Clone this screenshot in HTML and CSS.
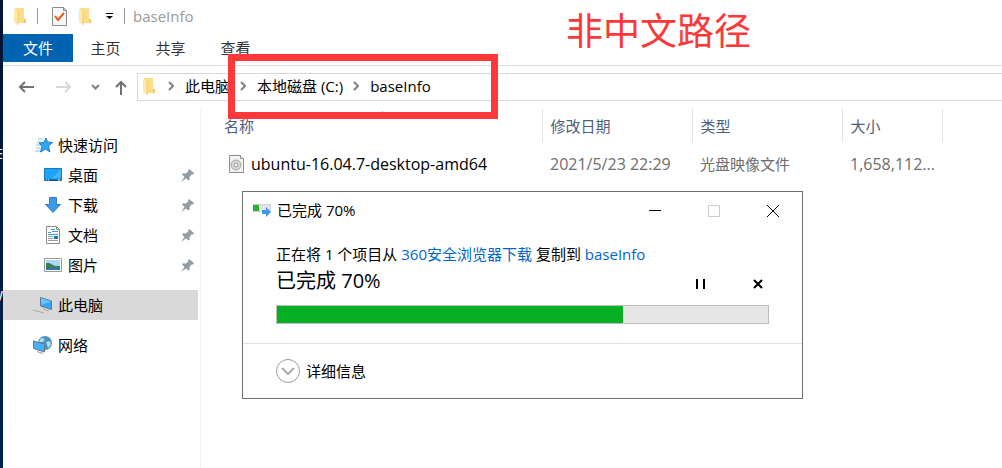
FILE: index.html
```html
<!DOCTYPE html>
<html lang="zh-CN">
<head>
    <meta charset="UTF-8">
    <meta name="viewport" content="width=device-width, initial-scale=1.0">
    <title>baseInfo</title>
    <link rel="stylesheet" href="styles.css">
</head>
<body>
    <!-- shared icons -->
    <svg class="sprite" aria-hidden="true">
        <symbol id="folder" viewBox="0 0 12 17">
            <path d="M1 0h9v11h2v4H1z" fill="#fbdc8a"/>
            <path d="M0 1l4 2v14l-4-3z" fill="#ffe9a8"/>
            <path d="M4 3v14" stroke="#f2cb6c"/>
            <path d="M10 11h2v4h-2z" fill="#f0c766"/>
        </symbol>
        <symbol id="pin" viewBox="0 0 13 13">
            <path d="M8 0l5 4-1 1.500-1.500 0L8.500 8l.3 2.500-1.300 1L5 9.500 0 13l3.500-5L1 5.500l1-1.300 3 .3L7.500 2 7 1z" fill="#929da6"/>
        </symbol>
        <symbol id="chevron" viewBox="0 0 6 10">
            <path d="M1 1l4 4-4 4" fill="none" stroke="#808080" stroke-width="2"/>
        </symbol>
    </svg>

    <div class="desktop">
        <span>E</span>
        <span>W</span>
    </div>
    <div class="window">
        <header class="titlebar">
            <svg class="folder"><use href="#folder"/></svg>
            <span class="divider"></span>
            <button class="tool check" aria-label="属性">
                <svg width="15" height="19" viewBox="0 0 15 19">
                    <path d="M.5.500h11l3 3v15H.5z" fill="#f7f7f7" stroke="#8a8a8a"/>
                    <path d="M11.500.500v3h3" fill="none" stroke="#8a8a8a"/>
                    <path d="M3 9l3 4 6-7" fill="none" stroke="#e8590c" stroke-width="2"/>
                </svg>
            </button>
            <button class="tool" aria-label="新建文件夹"><svg class="folder"><use href="#folder"/></svg></button>
            <button class="tool" aria-label="自定义快速访问工具栏">
                <svg width="7" height="6" viewBox="0 0 7 6"><path d="M0 0h7v1H0zM0 3h7L3.500 6z" fill="#000"/></svg>
            </button>
            <span class="divider"></span>
            <h1>baseInfo</h1>
        </header>

        <nav class="tabs">
            <button class="file">文件</button>
            <button>主页</button>
            <button>共享</button>
            <button>查看</button>
        </nav>

        <div class="navbar">
            <div class="arrows">
                <button aria-label="后退"><svg width="16" height="12" viewBox="0 0 16 12"><path d="M16 6H2M7 1L2 6l5 5" fill="none" stroke="#707070" stroke-width="2"/></svg></button>
                <button aria-label="前进"><svg width="16" height="12" viewBox="0 0 16 12"><path d="M0 6h14M9 1l5 5-5 5" fill="none" stroke="#d8d8d8" stroke-width="2"/></svg></button>
                <button class="recent" aria-label="最近浏览的位置"><svg width="9" height="6" viewBox="0 0 9 6"><path d="M1 1l3.500 3.500L8 1" fill="none" stroke="#808080" stroke-width="2"/></svg></button>
                <button class="up" aria-label="上移"><svg width="12" height="15" viewBox="0 0 12 15"><path d="M6 15V2M1 7l5-5 5 5" fill="none" stroke="#707070" stroke-width="2"/></svg></button>
            </div>
            <div class="address">
                <svg class="folder"><use href="#folder"/></svg>
                <svg class="chevron"><use href="#chevron"/></svg>
                <a href="#">此电脑</a>
                <svg class="chevron"><use href="#chevron"/></svg>
                <a href="#">本地磁盘 (C:)</a>
                <svg class="chevron"><use href="#chevron"/></svg>
                <a href="#">baseInfo</a>
            </div>
        </div>

        <div class="content">
            <aside class="sidebar">
                <a href="#" class="item">
                    <svg width="18" height="16" viewBox="0 0 18 16">
                        <path d="M3 2h5M2 5h4M1 8h5M1 11h4M0 14h5" stroke="#8cc4ea"/>
                        <path d="M11 1l1.500 4 5 .5-4 3.500 1.500 6-4.500-3-5 3 1.500-5.500L4 6l5-.5z" fill="#2fa8f0" stroke="#1c7cc4"/>
                    </svg>
                    <span>快速访问</span>
                </a>
                <a href="#" class="item sub">
                    <svg width="18" height="14" viewBox="0 0 18 14">
                        <path d="M.5.500h17v12H.5z" fill="#1ca4fc" stroke="#1478c0"/>
                        <path d="M17 1v8L8 11z" fill="#4ab8ff"/>
                        <path d="M1 12h16" stroke="#083c68"/>
                        <path d="M2 12h1M4 12h1M14 12h2" stroke="#fff"/>
                    </svg>
                    <span>桌面</span>
                    <svg class="pin"><use href="#pin"/></svg>
                </a>
                <a href="#" class="item sub">
                    <svg width="18" height="16" viewBox="0 0 18 16"><path d="M5.500.500h7v7h4l-7.500 8-7.500-8h4z" fill="#3f98e8" stroke="#2c7cc8"/></svg>
                    <span>下载</span>
                    <svg class="pin"><use href="#pin"/></svg>
                </a>
                <a href="#" class="item sub">
                    <svg width="18" height="18" viewBox="0 0 18 18">
                        <path d="M2.500.500h10l3 3v14h-13z" fill="#fff" stroke="#8a8a8a"/>
                        <path d="M12.500.500v3h3" fill="none" stroke="#8a8a8a"/>
                        <path d="M4 6.500h3M7 3.500h4M8 5.500h6M4 8.500h10" stroke="#3d9bd8"/>
                        <path d="M4 10.500h5M4 12.500h5M4 14.500h10" stroke="#999"/>
                        <path d="M10 10h4v3h-4z" fill="#2a70b8"/>
                    </svg>
                    <span>文档</span>
                    <svg class="pin"><use href="#pin"/></svg>
                </a>
                <a href="#" class="item sub">
                    <svg width="18" height="14" viewBox="0 0 18 14">
                        <path d="M.5.500h17v13H.5z" fill="#fff" stroke="#999"/>
                        <path d="M2 2h14v10H2z" fill="#a8d8f4"/>
                        <path d="M2 5h3l6 3h5v2H2z" fill="#3a7a58"/>
                        <path d="M2 10h14v2H2z" fill="#2878b0"/>
                    </svg>
                    <span>图片</span>
                    <svg class="pin"><use href="#pin"/></svg>
                </a>
                <a href="#" class="item root active">
                    <svg width="20" height="17" viewBox="0 0 20 17">
                        <path d="M7.500.500l11 3.500v8.500l-11-3.500z" fill="#38a8f4" stroke="#607888"/>
                        <path d="M8 1l10 3.500L8 8z" fill="#68c4ff"/>
                        <path d="M0 13l11 3M10 12l6 2" stroke="#a8a8a8"/>
                    </svg>
                    <span>此电脑</span>
                </a>
                <a href="#" class="item root">
                    <svg width="20" height="18" viewBox="0 0 20 18">
                        <circle cx="12" cy="7" r="7" fill="#4892c0"/>
                        <path d="M8 2l4 1-2 3H6zM13 6l4-1 1 4-3 3z" fill="#b4dcec"/>
                        <path d="M.5 5l11 3v8l-11-3.500z" fill="#48b0f8" stroke="#607888"/>
                        <path d="M4 15.500l6 2" stroke="#999"/>
                    </svg>
                    <span>网络</span>
                </a>
            </aside>

            <main>
                <table>
                    <thead>
                        <tr>
                            <th class="name">名称<svg class="sort" width="7" height="4" viewBox="0 0 7 4"><path d="M0 4l3.500-3L7 4" fill="none" stroke="#444"/></svg></th>
                            <th class="date">修改日期</th>
                            <th class="type">类型</th>
                            <th class="size">大小</th>
                            <th></th>
                        </tr>
                    </thead>
                    <tbody>
                        <tr>
                            <td>
                                <div class="filename">
                                    <svg width="15" height="18" viewBox="0 0 15 18">
                                        <path d="M.5.500h11l3 3v14H.5z" fill="#f4f4f4" stroke="#8c8c8c"/>
                                        <path d="M11.500.500v3h3" fill="#fff" stroke="#8c8c8c"/>
                                        <circle cx="7" cy="10" r="5" fill="#d8d8d8" stroke="#a8a8a8"/>
                                        <circle cx="7" cy="10" r="2" fill="#f4f4f4" stroke="#999"/>
                                    </svg>
                                    <span>ubuntu-16.04.7-desktop-amd64</span>
                                </div>
                            </td>
                            <td class="number">2021/5/23 22:29</td>
                            <td>光盘映像文件</td>
                            <td class="number">1,658,112...</td>
                            <td></td>
                        </tr>
                    </tbody>
                </table>
            </main>
        </div>
    </div>

    <section class="dialog" role="dialog" aria-labelledby="dialog-title">
        <header>
            <svg width="18" height="14" viewBox="0 0 18 14">
                <path d="M.5.500h17v7H.5z" fill="#e4e4e4" stroke="#cfcfcf"/>
                <path d="M0 1h6v6H0z" fill="#2fb02f"/>
                <path d="M9 6h4V3l5 5-5 5v-3H9z" fill="#3f98e8"/>
            </svg>
            <h2 id="dialog-title">已完成 70%</h2>
            <button aria-label="最小化"><svg width="12" height="12" viewBox="0 0 12 12"><path d="M0 5.500h12" stroke="#000"/></svg></button>
            <button aria-label="最大化" disabled><svg width="12" height="12" viewBox="0 0 12 12"><path d="M.5.500h11v11H.5z" fill="none" stroke="#ccc"/></svg></button>
            <button aria-label="关闭"><svg width="12" height="12" viewBox="0 0 12 12"><path d="M0 0l12 12M12 0L0 12" stroke="#000"/></svg></button>
        </header>
        <div class="copy">
            <p>正在将 1 个项目从 <a href="#">360安全浏览器下载</a> 复制到 <a href="#">baseInfo</a></p>
            <div class="status">
                <label for="copied">已完成 70%</label>
                <button aria-label="暂停"><svg width="10" height="10" viewBox="0 0 10 10"><path d="M1 0h2v10H1zM8 0h2v10H8z"/></svg></button>
                <button aria-label="取消"><svg width="10" height="10" viewBox="0 0 10 10"><path d="M1 1l8 8M9 1L1 9" stroke="#000" stroke-width="2"/></svg></button>
            </div>
            <progress id="copied" value="70.4" max="100"></progress>
        </div>
        <footer>
            <button>
                <svg width="24" height="24" viewBox="0 0 24 24"><circle cx="12" cy="12" r="11.500" fill="none" stroke="#999"/><path d="M6 9l6 6 6-6" fill="none" stroke="#aaa" stroke-width="2"/></svg>
                详细信息
            </button>
        </footer>
    </section>

    <div class="mark"></div>
    <p class="note">非中文路径</p>
</body>
</html>
```

FILE: styles.css
```css
*{
    margin: 0;
    padding: 0;
    box-sizing: border-box;
}
body{
    display: flex;
    min-height: 100vh;
    overflow: hidden;
    background-color: #fff;
    color: #000;
    font-family: "Open Sans", "Noto Sans CJK SC", sans-serif;
    font-size: 15px;
    line-height: 20px;
}
button{
    display: flex;
    align-items: center;
    justify-content: center;
    border: 0;
    background: none;
    color: inherit;
    font: inherit;
}
a{
    color: inherit;
    text-decoration: none;
}
svg{
    flex-shrink: 0;
}
.sprite{
    position: absolute;
    width: 0;
    height: 0;
}
.folder{
    width: 12px;
    height: 17px;
}

/* edge of the desktop behind the window */
.desktop{
    display: flex;
    flex-direction: column;
    align-items: flex-end;
    gap: 122px;
    width: 3px;
    padding-top: 143px;
    overflow: hidden;
    background: linear-gradient(#001433, #00244f);
    color: #fff;
}
.window{
    flex: 1;
    min-width: 0;
}

/* title bar */
.titlebar{
    display: flex;
    align-items: center;
    height: 34px;
    padding: 0 0 2px 11px;
}
.divider{
    width: 1px;
    height: 16px;
    margin: 0 8px 0 11px;
    background-color: #999;
}
.tool{
    width: 20px;
}
.tool + .tool{
    width: 24px;
}
.titlebar .check{
    width: 27px;
}
.titlebar h1{
    color: #999;
    font-size: 15px;
    font-weight: normal;
}
.tool + .divider{
    margin-left: 3px;
}

/* ribbon */
.tabs{
    display: flex;
    height: 32px;
    padding-bottom: 3px;
    border-bottom: 1px solid #dadbdc;
}
.tabs button{
    width: 65px;
    color: #333;
}
.tabs .file{
    width: 70px;
    background-color: #0063b1;
    color: #fff;
}

/* address bar */
.navbar{
    display: flex;
    align-items: center;
    height: 43px;
    padding-bottom: 1px;
}
.arrows{
    display: flex;
    align-items: center;
    width: 134px;
    padding-left: 4px;
}
.arrows button{
    width: 38px;
}
.arrows .recent{
    width: 24px;
}
.arrows .up{
    width: 28px;
}
.address{
    display: flex;
    flex: 1;
    align-items: center;
    height: 28px;
    padding: 0 0 2px 5px;
    border: 1px solid #d9d9d9;
    border-right: 0;
}
.chevron{
    width: 6px;
    height: 10px;
    margin: 0 11px 0 10px;
}
.address .folder + .chevron{
    margin-left: 13px;
}

/* folder tree */
.content{
    display: flex;
    min-height: calc(100vh - 109px);
}
.sidebar{
    width: 198px;
    padding: 21px 2px 0 0;
    border-right: 1px solid #f2f2f2;
}
.item{
    display: flex;
    align-items: center;
    height: 30px;
    padding: 0 4px 0 32px;
}
.item span{
    margin-left: 5px;
}
.sub{
    padding-left: 41px;
}
.sub span{
    margin-left: 6px;
}
.root{
    margin-top: 10px;
    padding-left: 30px;
}
.active{
    background-color: #d9d9d9;
}
.pin{
    width: 13px;
    height: 13px;
    margin-left: auto;
}

/* file list */
main{
    flex: 1;
    min-width: 0;
    padding-left: 16px;
}
table{
    width: 100%;
    table-layout: fixed;
    border-collapse: collapse;
}
th, td{
    padding-left: 8px;
    text-align: left;
    white-space: nowrap;
}
th{
    position: relative;
    height: 33px;
    border-right: 1px solid #e2e2e2;
    color: #4c607a;
    font-weight: normal;
}
th:last-child{
    border-right: 0;
}
th.name{
    padding-left: 7px;
}
td{
    height: 44px;
    color: #6d6d6d;
}
.number{
    font-size: 16px;
}
.name{
    width: 325px;
}
.date, .type{
    width: 150px;
}
.size{
    width: 100px;
}
.sort{
    position: absolute;
    top: 2px;
    left: 50%;
}
.filename{
    display: flex;
    align-items: center;
    gap: 7px;
    padding-left: 4px;
    color: #000;
    font-size: 16px;
}

/* copy dialog */
.dialog{
    position: absolute;
    top: 191px;
    left: 242px;
    width: 561px;
    border: 1px solid #707070;
    background-color: #fff;
}
.dialog header{
    display: flex;
    align-items: center;
    height: 38px;
    padding-left: 10px;
}
.dialog h2{
    flex: 1;
    margin-left: 6px;
    padding-bottom: 2px;
    font-size: 15px;
    font-weight: normal;
}
.dialog header button{
    width: 59px;
    height: 36px;
}
.copy{
    padding: 14px 33px 19px;
}
.copy a{
    color: #0066cc;
}
.status{
    display: flex;
    align-items: center;
    height: 34px;
    margin-bottom: 7px;
}
.status label{
    flex: 1;
    font-size: 20px;
}
.status button{
    width: 22px;
    height: 22px;
    margin-top: 6px;
}
.status button + button{
    margin-left: 36px;
}
progress{
    display: block;
    width: 100%;
    height: 19px;
    border: 1px solid #bcbcbc;
    background-color: #e6e6e6;
    appearance: none;
}
progress::-webkit-progress-bar{
    background-color: #e6e6e6;
}
progress::-webkit-progress-value{
    background-color: #06b025;
}
.dialog footer{
    padding: 15px 33px;
    border-top: 1px solid #dfdfdf;
}
.dialog footer button{
    gap: 6px;
}

/* annotations */
.mark{
    position: absolute;
    top: 54px;
    left: 228px;
    width: 270px;
    height: 65px;
    border: 7px solid #fd3838;
}
.note{
    position: absolute;
    top: 8px;
    left: 566px;
    color: #fd3838;
    font-size: 37px;
    line-height: 46px;
}
```
